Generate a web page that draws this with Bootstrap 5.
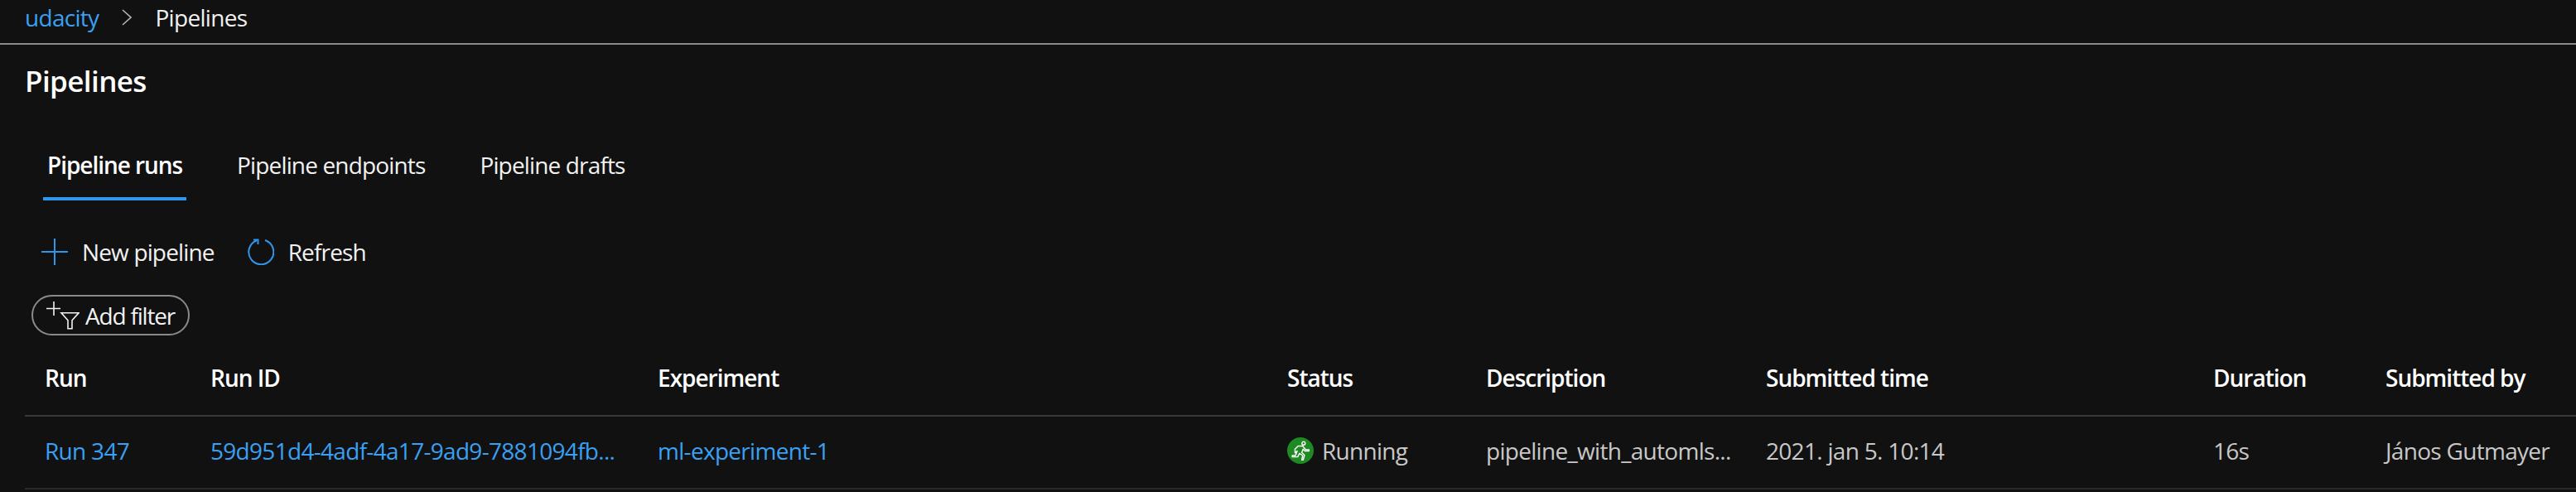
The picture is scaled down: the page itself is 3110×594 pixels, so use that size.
<!DOCTYPE html>
<html lang="en">
<head>
<meta charset="utf-8">
<title>Pipelines</title>
<link href="https://cdn.jsdelivr.net/npm/bootstrap@5.3.0/dist/css/bootstrap.min.css" rel="stylesheet">
<style>
html,body{background:#111;height:594px;overflow:hidden}
body{font-family:"Open Sans","Liberation Sans",sans-serif;font-size:28px;color:#fff;letter-spacing:-.7px}
a{text-decoration:none;color:#3aa0f3}
.crumbbar{height:54px;border-bottom:2px solid #8a8a8a;padding:0 0 10px 30px;gap:28px}
.crumbbar .current{color:#f0f0f0}
.pagetitle{font-size:35px;font-weight:600;margin:0;padding:25px 0 0 30px;line-height:38px;letter-spacing:-.6px}
.tabrow{margin:64px 0 0 52px;gap:56px;height:61px;align-items:flex-start}
.tabrow .nav-link{padding:0 5px;line-height:36px;height:61px;color:#f2f2f2;font-size:28px;letter-spacing:-.85px;border-bottom:4px solid transparent}
.tabrow .nav-link.active{color:#fff;font-weight:600;letter-spacing:-1.05px;border-bottom-color:#2f96ee}
.toolrow{margin:46px 0 0 50px;height:32px;gap:40px}
.toolbtn{display:flex;align-items:center;gap:17px;padding:0;border:0;color:#f2f2f2;font-size:28px;letter-spacing:-.85px;line-height:32px}
.filterpill{margin:36px 0 0 38px;width:191px;height:49px;border:2px solid #8a8a8a;padding:0 0 0 16px;color:#f2f2f2;font-size:28px;letter-spacing:-1.2px;display:flex;align-items:center;gap:7px;white-space:nowrap}
.runtable{width:3080px;margin:35px 0 0 30px;table-layout:fixed;--bs-table-bg:transparent;--bs-table-color:#c8c8c8;--bs-table-border-color:#3a3a3a}
.runtable th,.runtable td{padding:0 0 0 24px;white-space:nowrap;vertical-align:middle;box-shadow:none}
.runtable thead th{height:62px;font-weight:600;color:#fff;letter-spacing:-1px;border-bottom:2px solid #3a3a3a;line-height:32px;vertical-align:top}
.runtable tbody td{height:88px;border-bottom:2px solid #2a2a2a;padding-bottom:4px}
.cw1{width:200px}.cw2{width:540px}.cw3{width:760px}.cw4{width:240px}.cw5{width:338px}.cw6{width:540px}.cw7{width:208px}.cw8{width:254px}
.statusdot{width:32px;height:32px;background:#1f8a24;flex:none}
.statuswrap{gap:10px}
</style>
</head>
<body>
<nav class="crumbbar d-flex align-items-center">
  <a href="#">udacity</a>
  <svg width="12" height="20" viewBox="0 0 12 20" fill="none" stroke="#b5b5b5" stroke-width="1.6"><path d="M1 1l10 9-10 9"/></svg>
  <span class="current">Pipelines</span>
</nav>
<h1 class="pagetitle">Pipelines</h1>
<ul class="nav tabrow">
  <li class="nav-item"><a class="nav-link active" href="#">Pipeline runs</a></li>
  <li class="nav-item"><a class="nav-link" href="#">Pipeline endpoints</a></li>
  <li class="nav-item"><a class="nav-link" href="#">Pipeline drafts</a></li>
</ul>
<div class="toolrow d-flex">
  <button class="btn toolbtn" type="button">
    <svg width="32" height="32" viewBox="0 0 32 32" stroke="#2f96ee" stroke-width="2" fill="none"><path d="M16 0v32M0 16h32"/></svg>
    New pipeline
  </button>
  <button class="btn toolbtn" type="button">
    <svg width="32" height="32" viewBox="0 0 32 32" stroke="#2f96ee" stroke-width="2" fill="none"><path d="M11 2.200A15 15 0 1 0 21 2"/><path d="M7 1.500h5.500V7"/></svg>
    Refresh
  </button>
</div>
<button class="btn rounded-pill filterpill" type="button">
  <svg width="40" height="34" viewBox="0 0 40 34" fill="none" stroke="#f2f2f2" stroke-width="1.6"><path d="M9 0v17M0 8.500h17"/><path d="M18 13.800h21l-8 9v10h-5v-10z"/></svg>
  Add filter
</button>
<table class="table runtable mb-0">
  <colgroup><col class="cw1"><col class="cw2"><col class="cw3"><col class="cw4"><col class="cw5"><col class="cw6"><col class="cw7"><col class="cw8"></colgroup>
  <thead>
    <tr><th>Run</th><th>Run ID</th><th>Experiment</th><th>Status</th><th>Description</th><th>Submitted time</th><th>Duration</th><th>Submitted by</th></tr>
  </thead>
  <tbody>
    <tr>
      <td><a href="#">Run 347</a></td>
      <td><a href="#">59d951d4-4adf-4a17-9ad9-7881094fb...</a></td>
      <td><a href="#">ml-experiment-1</a></td>
      <td><span class="d-flex align-items-center statuswrap"><span class="statusdot rounded-circle d-flex align-items-center justify-content-center">
        <svg width="24" height="24" viewBox="0 0 22 22" fill="none" stroke="#fff" stroke-width="1.300" stroke-linejoin="round" stroke-linecap="round"><circle cx="14.500" cy="3" r="1.800"/><path d="M5 9.500l3.500-3.500h5l3.500 4h3.500v1.500h-4.500l-2-2-1.500 3.500 3 3-1.500 5.500h-1.500l1-5-3.500-2.500-2 4H2v-1.500h3.500l2-5-1.500 1-1 1z"/></svg>
      </span>Running</span></td>
      <td>pipeline_with_automls...</td>
      <td>2021. jan 5. 10:14</td>
      <td>16s</td>
      <td>János Gutmayer</td>
    </tr>
  </tbody>
</table>
<script src="https://cdn.jsdelivr.net/npm/bootstrap@5.3.0/dist/js/bootstrap.bundle.min.js"></script>
</body>
</html>
